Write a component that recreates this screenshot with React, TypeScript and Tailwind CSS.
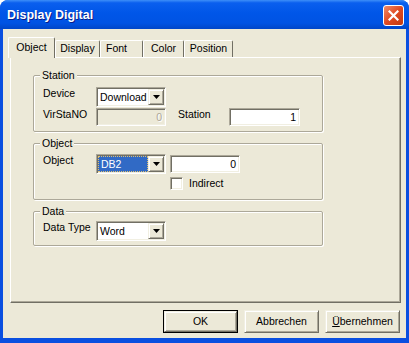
import React from "react";

const sunken =
  "border border-t-[#aca899] border-l-[#aca899] border-b-white border-r-white shadow-[inset_1px_1px_0_#716f64,inset_-1px_-1px_0_#f1efe2]";
const raised =
  "border border-t-[#f1efe2] border-l-[#f1efe2] border-b-[#716f64] border-r-[#716f64] shadow-[inset_1px_1px_0_#ffffff,inset_-1px_-1px_0_#aca899]";

function Arrow() {
  return (
    <svg width="7" height="4" viewBox="0 0 7 4">
      <path d="M0 0H7L3.5 4Z" fill="#000" />
    </svg>
  );
}

function Combo({ value, selected }: { value: string; selected?: boolean }) {
  return (
    <div className={`w-[70px] h-[20px] bg-white ${sunken} flex items-center pl-[1px] pr-[1px]`}>
      <div className="flex-1 h-[16px] flex items-center min-w-0">
        {selected ? (
          <div className="w-full h-[16px] bg-[#316ac5] text-white border border-dotted border-[#e0c070] pl-[2px] leading-[14px]">
            {value}
          </div>
        ) : (
          <div className="pl-[2px] leading-[14px]">{value}</div>
        )}
      </div>
      <div className={`w-[16px] h-[16px] bg-[#ece9d8] ${raised} flex items-center justify-center`}>
        <Arrow />
      </div>
    </div>
  );
}

function Edit({ value, w, disabled }: { value: string; w: string; disabled?: boolean }) {
  return (
    <div
      className={`${w} h-[18px] ${disabled ? "bg-[#ece9d8] text-[#aca899] [text-shadow:1px_1px_0_#ffffff]" : "bg-white"} ${sunken} flex items-center justify-end pr-[3px] leading-[14px]`}
    >
      {value}
    </div>
  );
}

function GroupBox({
  title,
  className,
  children,
}: {
  title: string;
  className: string;
  children: React.ReactNode;
}) {
  return (
    <div
      className={`w-[290px] border border-[#aca899] rounded-[2px] shadow-[inset_1px_1px_0_#ffffff,1px_1px_0_#ffffff] pl-[9px] ${className}`}
    >
      <div className="-mt-[7px] -ml-[3px] h-[13px] leading-[13px] w-fit px-[2px] bg-[#ece9d8]">{title}</div>
      {children}
    </div>
  );
}

function Button({ label, def }: { label: React.ReactNode; def?: boolean }) {
  return (
    <div className={`w-[75px] h-[23px] ${def ? "border border-black" : ""} flex`}>
      <div className={`flex-1 ${raised} bg-[#ece9d8] flex items-center justify-center leading-[13px]`}>{label}</div>
    </div>
  );
}

export default function App() {
  return (
    <div className="w-[409px] h-[343px] bg-white">
      <div className="w-[409px] h-[343px] rounded-t-[8px] bg-[#0a4fe0] flex flex-col overflow-hidden font-['Liberation_Sans',Arial,sans-serif] text-[10.5px] text-black">
        <div className="h-[29px] flex items-start justify-between pl-[7px] pr-[5px] bg-[linear-gradient(to_bottom,#3d8ff8_0%,#0a5fee_10%,#0056e8_45%,#0053e3_80%,#0046c8_100%)]">
          <div className="mt-[7px] text-white font-bold text-[12.5px] leading-[16px] [text-shadow:1px_1px_0_#0a1e8a]">
            Display Digital
          </div>
          <div className="mt-[5px] w-[21px] h-[21px] rounded-[3px] border border-white bg-[linear-gradient(135deg,#f08c6a_0%,#e04a22_50%,#c23a10_100%)] flex items-center justify-center">
            <svg width="11" height="11" viewBox="0 0 11 11">
              <path d="M1.5 1.5L9.5 9.5M9.5 1.5L1.5 9.5" stroke="#fff" strokeWidth="2.2" strokeLinecap="square" />
            </svg>
          </div>
        </div>
        <div className="flex-1 ml-[3px] mr-[3px] mb-[5px] bg-[#ece9d8] flex flex-col">
          <div className="mt-[8px] ml-[5px] h-[21px] -mb-[1px] flex items-end relative z-10">
            <div className="w-[47px] h-[21px] border-l border-t border-r border-l-white border-t-white border-r-[#716f64] rounded-t-[2px] bg-[#ece9d8] pt-[3px] text-center leading-[13px]">
              Object
            </div>
            <div className="w-[45px] h-[17px] mb-[1px] border-l border-t border-r border-l-white border-t-white border-r-[#716f64] rounded-t-[2px] text-center leading-[15px]">
              Display
            </div>
            <div className="w-[43px] h-[17px] mb-[1px] border-l border-t border-r border-l-white border-t-white border-r-[#716f64] rounded-t-[2px] pl-[5px] leading-[15px]">
              Font
            </div>
            <div className="w-[41px] h-[17px] mb-[1px] border-l border-t border-r border-l-white border-t-white border-r-[#716f64] rounded-t-[2px] text-center leading-[15px]">
              Color
            </div>
            <div className="w-[49px] h-[17px] mb-[1px] border-l border-t border-r border-l-white border-t-white border-r-[#716f64] rounded-t-[2px] text-center leading-[15px]">
              Position
            </div>
          </div>
          <div className="ml-[7px] w-[391px] h-[246px] border border-t-white border-l-white border-r-[#716f64] border-b-[#716f64] shadow-[inset_-1px_-1px_0_#aca899] flex flex-col pl-[22px]">
            <GroupBox title="Station" className="mt-[17px] pb-[5px]">
              <div className="mt-[5px] flex items-start">
                <div className="w-[53px] leading-[13px]">Device</div>
                <Combo value="Download" />
              </div>
              <div className="mt-[1px] flex items-start">
                <div className="w-[53px] leading-[13px]">VirStaNO</div>
                <Edit value="0" w="w-[70px]" disabled />
                <div className="ml-[12px] w-[51px] leading-[13px]">Station</div>
                <Edit value="1" w="w-[71px]" />
              </div>
            </GroupBox>
            <GroupBox title="Object" className="mt-[11px] pb-[9px]">
              <div className="mt-[4px] flex items-start">
                <div className="w-[53px] leading-[13px]">Object</div>
                <Combo value="DB2" selected />
                <div className="ml-[4px] mt-[1px]">
                  <Edit value="0" w="w-[70px]" />
                </div>
              </div>
              <div className="mt-[3px] ml-[127px] flex items-center">
                <div className={`w-[13px] h-[13px] bg-white ${sunken}`} />
                <div className="ml-[6px] leading-[13px]">Indirect</div>
              </div>
            </GroupBox>
            <GroupBox title="Data" className="mt-[11px] pb-[4px]">
              <div className="mt-[3px] flex items-start">
                <div className="w-[53px] leading-[13px]">Data Type</div>
                <Combo value="Word" />
              </div>
            </GroupBox>
          </div>
          <div className="mt-[7px] mr-[6px] flex justify-end gap-[6px]">
            <Button label="OK" def />
            <Button label="Abbrechen" />
            <Button
              label={
                <span>
                  <span className="underline">Ü</span>bernehmen
                </span>
              }
            />
          </div>
        </div>
      </div>
    </div>
  );
}
